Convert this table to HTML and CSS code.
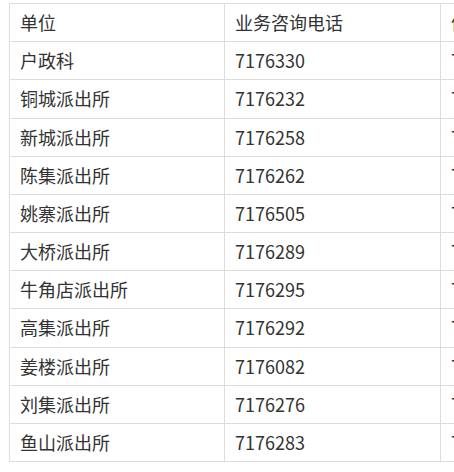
FILE: index.html
```html
<!DOCTYPE html>
<html lang="zh-CN">
<head>
<meta charset="utf-8">
<title>业务咨询电话</title>
<link rel="stylesheet" href="styles.css">
</head>
<body>
<div class="wrap">
<table class="phones">
<colgroup><col class="c1"><col class="c2"><col class="c3"></colgroup>
<tr><td>单位</td><td>业务咨询电话</td><td>值班电话</td></tr>
<tr><td>户政科</td><td>7176330</td><td>7176330</td></tr>
<tr><td>铜城派出所</td><td>7176232</td><td>7176232</td></tr>
<tr><td>新城派出所</td><td>7176258</td><td>7176258</td></tr>
<tr><td>陈集派出所</td><td>7176262</td><td>7176262</td></tr>
<tr><td>姚寨派出所</td><td>7176505</td><td>7176505</td></tr>
<tr><td>大桥派出所</td><td>7176289</td><td>7176289</td></tr>
<tr><td>牛角店派出所</td><td>7176295</td><td>7176295</td></tr>
<tr><td>高集派出所</td><td>7176292</td><td>7176292</td></tr>
<tr><td>姜楼派出所</td><td>7176082</td><td>7176082</td></tr>
<tr><td>刘集派出所</td><td>7176276</td><td>7176276</td></tr>
<tr><td>鱼山派出所</td><td>7176283</td><td>7176283</td></tr>
</table>
</div>
</body>
</html>
```
FILE: styles.css
```css
html, body {
  margin: 0;
  padding: 0;
  background: #fff;
  overflow: hidden;
}
.wrap {
  padding: 3px 0 0 9px;
  width: 700px;
}
.phones {
  border-collapse: collapse;
  table-layout: fixed;
  width: 648px;
  font-family: "Noto Sans CJK SC", "Noto Sans", sans-serif;
  font-size: 18px;
  color: #333;
}
.c1 { width: 215px; }
.c2 { width: 216px; }
.c3 { width: 217px; }
.phones td {
  border: 1px solid #ddd;
  padding: 6px 10px;
  line-height: 25.17px;
  height: 25.17px;
  white-space: nowrap;
  overflow: hidden;
}
```
